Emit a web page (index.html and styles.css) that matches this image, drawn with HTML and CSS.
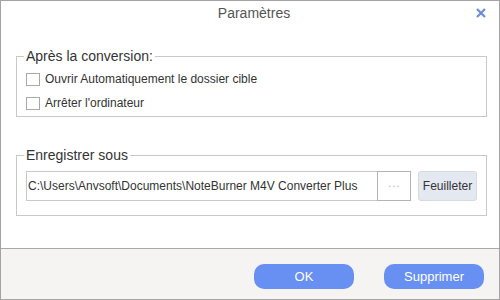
FILE: index.html
```html
<html lang="fr">
<head>
    <meta charset="UTF-8">
    <title>Paramètres</title>
    <link rel="stylesheet" href="styles.css">
</head>
<body>
    <div class="dialog">
        <div class="dialog-header">
            <span class="dialog-title">Paramètres</span>
            <span class="dialog-close">
                <svg width="10" height="10" viewBox="0 0 10 10">
                    <path d="M1 1 L9 9 M9 1 L1 9" stroke="#6b8cdb" stroke-width="2.2" fill="none"/>
                </svg>
            </span>
        </div>

        <div class="dialog-body">
            <fieldset class="group">
                <legend>Après la conversion:</legend>
                <label class="check-row">
                    <input type="checkbox" class="check">
                    <span>Ouvrir Automatiquement le dossier cible</span>
                </label>
                <label class="check-row">
                    <input type="checkbox" class="check">
                    <span>Arrêter l'ordinateur</span>
                </label>
            </fieldset>

            <fieldset class="group group-save">
                <legend>Enregistrer sous</legend>
                <div class="path-row">
                    <div class="path-input">C:\Users\Anvsoft\Documents\NoteBurner M4V Converter Plus</div>
                    <div class="path-more">•••</div>
                    <button class="browse">Feuilleter</button>
                </div>
            </fieldset>
        </div>

        <div class="dialog-footer">
            <button class="primary">OK</button>
            <button class="primary">Supprimer</button>
        </div>
    </div>
</body>
</html>
```

FILE: styles.css
```css
body {
    margin: 0;
    background-color: #ffffff;
    font-family: "Liberation Sans", Arial, sans-serif;
    color: #333;
}

.dialog {
    width: 500px;
    height: 300px;
    box-sizing: border-box;
    border: 1px solid #a3a3a3;
    display: flex;
    flex-direction: column;
    background-color: #ffffff;
}

/* HEADER */

.dialog-header {
    height: 24px;
    display: flex;
    align-items: center;
    justify-content: center;
    position: relative;
}

.dialog-title {
    font-size: 14px;
    color: #555;
    margin-left: 8px;
}

.dialog-close {
    position: absolute;
    right: 13px;
    top: 7px;
    width: 10px;
    height: 10px;
    display: flex;
}

/* BODY */

.dialog-body {
    flex: 1;
    padding: 23px 12px 0 15px;
}

fieldset.group {
    margin: 0;
    padding: 3px 9px 1px 9px;
    border: 1px solid #c8c8c8;
    min-width: 0;
}

fieldset.group legend {
    font-size: 14px;
    line-height: 16px;
    padding: 0 2px;
    margin-left: -2px;
    color: #333;
}

.group-save {
    margin-top: 30px !important;
    padding: 8px 9px 14px 9px !important;
}

.check-row {
    display: flex;
    align-items: center;
    height: 24px;
    font-size: 12px;
    color: #333;
}

.check {
    appearance: none;
    -webkit-appearance: none;
    width: 14px;
    height: 13px;
    margin: 0 5px 0 0;
    border: 1px solid #a8a8a8;
    background-color: #fff;
    box-sizing: border-box;
}

.path-row {
    display: flex;
    height: 30px;
}

.path-input {
    flex: 1;
    border: 1px solid #c9c9c9;
    border-right: none;
    font-size: 12px;
    line-height: 28px;
    padding-left: 1px;
    color: #333;
    white-space: nowrap;
    overflow: hidden;
}

.path-more {
    width: 32px;
    border: 1px solid #b3b3b3;
    font-size: 6px;
    letter-spacing: 2px;
    text-indent: 2px;
    color: #c4c4c4;
    text-align: center;
    line-height: 28px;
}

.browse {
    margin-left: 7px;
    width: 59px;
    height: 30px;
    padding: 0;
    border: 1px solid #d5d9e1;
    border-radius: 3px;
    background-color: #e4e8f0;
    color: #333;
    font-family: "Liberation Sans", Arial, sans-serif;
    font-size: 12px;
}

/* FOOTER */

.dialog-footer {
    height: 51px;
    border-top: 1px solid #a8a8a8;
    background-color: #f5f4f3;
    display: flex;
    justify-content: flex-end;
    align-items: flex-start;
    gap: 30px;
    padding: 15px 15px 0 0;
    box-sizing: border-box;
}

button.primary {
    width: 100px;
    height: 25px;
    border: none;
    border-radius: 10px;
    background-color: #6890f2;
    color: #ffffff;
    font-family: "Liberation Sans", Arial, sans-serif;
    font-size: 13px;
    padding: 0;
}
```
